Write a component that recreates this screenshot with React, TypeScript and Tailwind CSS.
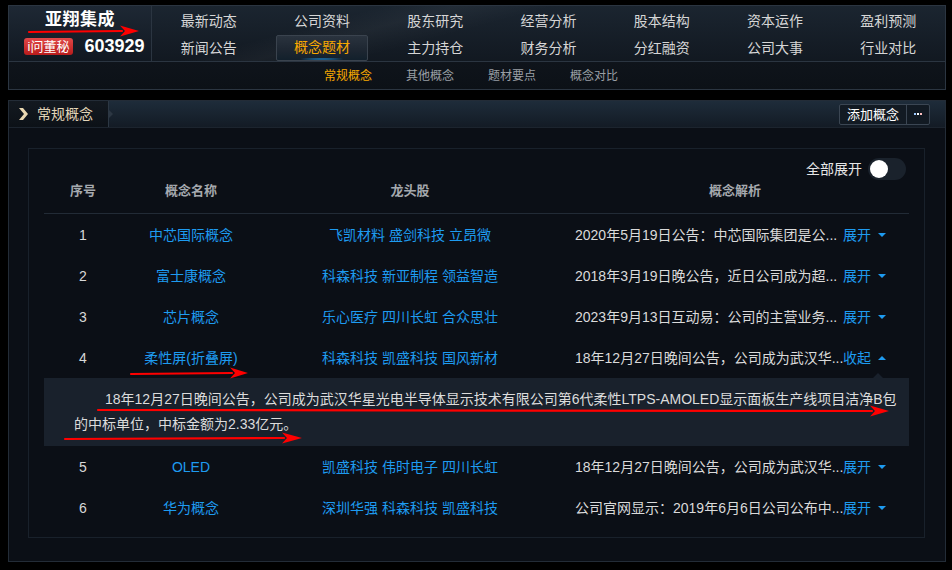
import React from 'react';

const TOP_NAV = [
  ['最新动态', '公司资料', '股东研究', '经营分析', '股本结构', '资本运作', '盈利预测'],
  ['新闻公告', '概念题材', '主力持仓', '财务分析', '分红融资', '公司大事', '行业对比'],
];

const SUB_NAV = ['常规概念', '其他概念', '题材要点', '概念对比'];

interface Row {
  no: number;
  name: string;
  stocks: string;
  brief: string;
  open?: boolean;
}

const ROWS: Row[] = [
  { no: 1, name: '中芯国际概念', stocks: '飞凯材料 盛剑科技 立昂微', brief: '2020年5月19日公告：中芯国际集团是公...' },
  { no: 2, name: '富士康概念', stocks: '科森科技 新亚制程 领益智造', brief: '2018年3月19日晚公告，近日公司成为超...' },
  { no: 3, name: '芯片概念', stocks: '乐心医疗 四川长虹 合众思壮', brief: '2023年9月13日互动易：公司的主营业务...' },
  { no: 4, name: '柔性屏(折叠屏)', stocks: '科森科技 凯盛科技 国风新材', brief: '18年12月27日晚间公告，公司成为武汉华...', open: true },
  { no: 5, name: 'OLED', stocks: '凯盛科技 伟时电子 四川长虹', brief: '18年12月27日晚间公告，公司成为武汉华...' },
  { no: 6, name: '华为概念', stocks: '深圳华强 科森科技 凯盛科技', brief: '公司官网显示：2019年6月6日公司公布中...' },
];

function Caret({ up }: { up?: boolean }) {
  return (
    <svg width="8" height="6" viewBox="0 0 8 6" className="ml-[7px]">
      <path d={up ? 'M0 5 L4 1 L8 5 Z' : 'M0 1 L8 1 L4 5 Z'} fill="#1e9bf0" />
    </svg>
  );
}

function Arrow({ x1, y1, x2, y2, head }: { x1: number; y1: number; x2: number; y2: number; head: number }) {
  const hx = x2 - head;
  return (
    <g>
      <line x1={x1} y1={y1} x2={hx + 2} y2={y2} stroke="#f00" strokeWidth={2.2} strokeLinecap="round" />
      <polygon points={`${hx},${y2 - 5.5} ${x2},${y2} ${hx},${y2 + 5.5} ${hx + 5},${y2}`} fill="#f00" />
    </g>
  );
}

export default function App() {
  return (
    <div className="relative w-[952px] h-[570px] overflow-hidden bg-black font-['Liberation_Sans','Noto_Sans_CJK_SC',sans-serif] text-[14px] text-[#d6d6d6]">
      {/* top header */}
      <div className="ml-[8px] w-[938px] mt-[5px] h-[85px] border border-[#2b3541] bg-[linear-gradient(165deg,transparent_30%,rgba(255,255,255,0.035)_36%,transparent_44%),linear-gradient(180deg,#1b2530,#0d1219)] flex flex-col">
        <div className="h-[55px] flex">
          <div className="w-[143px] border-r border-[#2b3541] flex flex-col items-center bg-[linear-gradient(180deg,#1e2834,#111821)]">
            <div className="mt-[2px] h-[24px] leading-[24px] text-[17px] font-bold text-white tracking-[0.5px]">亚翔集成</div>
            <div className="mt-[4px] ml-[8px] flex items-center">
              <span className="h-[17px] px-[4px] rounded-[3px] bg-[linear-gradient(180deg,#e24848,#b81c1c)] text-white text-[13px] leading-[17px]">i问董秘</span>
              <span className="ml-[11px] text-[18px] font-bold text-white leading-[20px]">603929</span>
            </div>
          </div>
          <div className="flex-1 grid grid-cols-7 grid-rows-2">
            {TOP_NAV.map((row, ri) =>
              row.map((t) => {
                const active = t === '概念题材';
                return (
                  <div key={t} className="flex items-center justify-center">
                    {active ? (
                      <div className="relative w-[92px] h-[26px] mt-[1px] border border-[#3a434e] rounded-[2px] bg-[linear-gradient(180deg,#2a333e,#1d2631_60%,#12202c)] flex items-center justify-center text-[#f7a800]">
                        {t}
                        <div className="absolute bottom-0 left-[20px] right-[20px] h-[2px] bg-[radial-gradient(ellipse_at_center,#1e9bf0,transparent_70%)]" />
                      </div>
                    ) : (
                      <span className={ri === 0 ? 'mt-[3px]' : 'mt-[2px]'}>{t}</span>
                    )}
                  </div>
                );
              })
            )}
          </div>
        </div>
        <div className="flex-1 border-t border-[#2b3541] flex items-center pl-[298px] text-[12px] bg-[linear-gradient(180deg,#0f141b,#0c1117)]">
          {SUB_NAV.map((t, i) => (
            <div key={t} className={`w-[82px] text-center ${i === 0 ? 'text-[#f7a800]' : 'text-[#9a9fa5]'}`}>
              {t}
            </div>
          ))}
        </div>
      </div>

      {/* concept panel */}
      <div className="ml-[8px] w-[938px] mt-[10px] h-[462px] border border-[#232c37] bg-[#0b0f16] flex flex-col">
        <div className="h-[27px] flex items-center border-b border-[#1c242e] bg-[linear-gradient(180deg,#1e2c3a,#131b25)]">
          <div className="relative h-full w-[100px] bg-[linear-gradient(180deg,#131920,#0c1117)] border-r border-[#2c3743] flex items-center">
            <svg width="10" height="12" viewBox="0 0 10 12" className="ml-[9px]">
              <path d="M1 0 L5 0 L10 6 L5 12 L1 12 L6 6 Z" fill="#e9d7b0" />
            </svg>
            <span className="ml-[9px] text-[#e3d5b8]">常规概念</span>
            <div className="absolute right-[-5px] top-[9px] w-0 h-0 border-y-[4px] border-y-transparent border-l-[4px] border-l-[#2c3743]" />
          </div>
          <div className="flex-1" />
          <div className="flex h-[21px] mr-[15px] border border-[#3b4653] rounded-[2px] bg-[#121a23]">
            <div className="px-[7px] text-[13px] leading-[19px] text-white border-r border-[#3b4653]">添加概念</div>
            <div className="w-[22px] flex items-center justify-center gap-[1px]">
              <span className="w-[2px] h-[2px] bg-[#9cc9ff]" />
              <span className="w-[2px] h-[2px] bg-[#ffffff]" />
              <span className="w-[2px] h-[2px] bg-[#ffc0c0]" />
            </div>
          </div>
        </div>

        <div className="flex-1 pt-[20px] pl-[19px] pr-[20px] pb-[23px]">
          <div className="h-full border border-[#19212b] px-[15px]">
            <div className="h-[31px] pt-[9px] flex justify-end items-center pr-[3px]">
              <span className="text-[#e6e6e6] mr-[6px]">全部展开</span>
              <div className="w-[38px] h-[22px] rounded-full bg-[#1a222c] flex items-center pl-[2px]">
                <div className="w-[18px] h-[18px] rounded-full bg-white" />
              </div>
            </div>
            <div className="grid grid-cols-[78px_138px_300px_350px] h-[34px] items-start pt-[1px] border-b border-[#222b36] text-[13px] font-bold text-[#a5a9ae]">
              <div className="text-center">序号</div>
              <div className="text-center">概念名称</div>
              <div className="text-center">龙头股</div>
              <div className="text-center">概念解析</div>
            </div>
            {ROWS.map((r) => (
              <React.Fragment key={r.no}>
                <div className="grid grid-cols-[78px_138px_300px_350px] h-[41px] items-center pt-[1px]">
                  <div className="text-center text-[#d8d8d8]">{r.no}</div>
                  <div className="text-center text-[#1e9bf0]">{r.name}</div>
                  <div className="text-center text-[#1e9bf0]">{r.stocks}</div>
                  <div className="flex items-center pl-[15px]">
                    <span className="w-[268px] whitespace-nowrap overflow-hidden text-[#dadada]">{r.brief}</span>
                    <span className="text-[#1e9bf0]">{r.open ? '收起' : '展开'}</span>
                    <Caret up={r.open} />
                  </div>
                </div>
                {r.open && (
                  <div className="relative h-[68px] bg-[#19212c] pl-[30px] pr-[10px] py-[9px] leading-[25px] text-[#dcdcdc] whitespace-nowrap">
                    <div className="absolute top-[-5px] left-[829px] w-0 h-0 border-x-[5px] border-x-transparent border-b-[5px] border-b-[#19212c]" />
                    <span className="pl-[31px]">18年12月27日晚间公告，公司成为武汉华星光电半导体显示技术有限公司第6代柔性LTPS-AMOLED显示面板生产线项目洁净B包</span>
                    <br />
                    <span>的中标单位，中标金额为2.33亿元。</span>
                  </div>
                )}
              </React.Fragment>
            ))}
          </div>
        </div>
      </div>

      {/* annotation arrows */}
      <svg className="absolute inset-0 pointer-events-none" width="952" height="570">
        <Arrow x1={29} y1={32} x2={139} y2={31} head={19} />
        <Arrow x1={131} y1={374} x2={248} y2={373} head={18} />
        <Arrow x1={98} y1={410} x2={889} y2={411} head={19} />
        <Arrow x1={65} y1={439} x2={302} y2={438} head={20} />
      </svg>
    </div>
  );
}
